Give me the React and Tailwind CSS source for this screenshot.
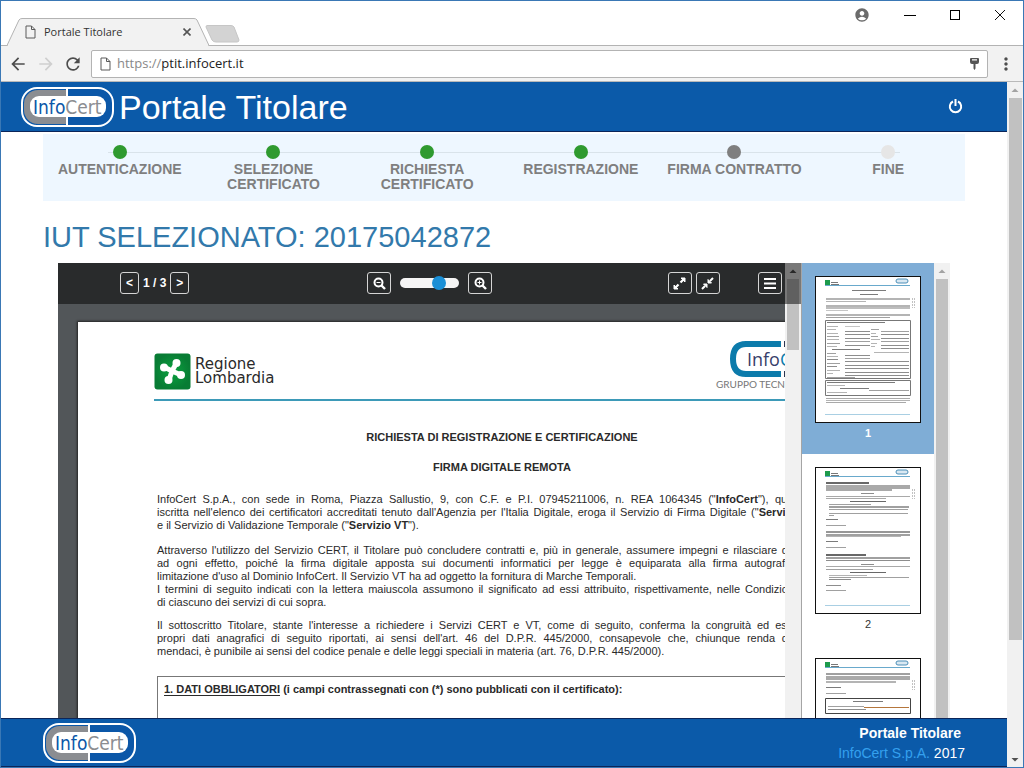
import React, { useState } from 'react';
import { MdAccountCircle, MdArrowBack, MdArrowForward, MdMoreVert, MdRefresh } from 'react-icons/md';

const steps = [
  { lines: ['AUTENTICAZIONE'], color: 'bg-[#2f9a2f]' },
  { lines: ['SELEZIONE', 'CERTIFICATO'], color: 'bg-[#2f9a2f]' },
  { lines: ['RICHIESTA', 'CERTIFICATO'], color: 'bg-[#2f9a2f]' },
  { lines: ['REGISTRAZIONE'], color: 'bg-[#2f9a2f]' },
  { lines: ['FIRMA CONTRATTO'], color: 'bg-[#7f7f7f]' },
  { lines: ['FINE'], color: 'bg-[#e6e6e6]' }
];

// Each row of a thumbnail: [x, y, width, height, opacity]
const thumbRows = {
  1: [
    [36, 13, 34, 1, 0.7], [44, 17, 18, 1, 0.7],
    [10, 21, 84, 2, 0.4], [10, 24, 40, 1, 0.4],
    [10, 28, 84, 2, 0.4], [10, 30, 84, 2, 0.35], [10, 33, 22, 1, 0.3],
    [10, 37, 84, 2, 0.4], [10, 40, 64, 1, 0.5],
    [11, 45, 58, 1, 0.7],
    [11, 49, 11, 1, 0.4], [11, 52, 9, 1, 0.4], [11, 56, 11, 1, 0.4], [11, 59, 12, 1, 0.5],
    [11, 62, 12, 1, 0.4], [11, 66, 13, 1, 0.5], [11, 69, 10, 1, 0.4], [16, 72, 28, 1, 0.7],
    [11, 76, 9, 1, 0.5], [11, 79, 11, 1, 0.4], [11, 82, 11, 1, 0.6], [11, 86, 13, 1, 0.5],
    [11, 89, 10, 1, 0.6], [11, 93, 13, 1, 0.4], [11, 96, 6, 1, 0.4], [11, 100, 28, 1, 0.5],
    [29, 49, 15, 1, 0.3], [29, 54, 25, 1, 0.6], [29, 57, 25, 1, 0.6], [29, 61, 25, 1, 0.6],
    [29, 64, 25, 1, 0.5], [29, 68, 25, 1, 0.6], [29, 78, 25, 1, 0.6], [29, 81, 25, 1, 0.5],
    [55, 52, 8, 1, 0.5], [55, 56, 5, 1, 0.4], [55, 59, 7, 1, 0.5], [55, 62, 9, 1, 0.4],
    [55, 66, 6, 1, 0.4], [55, 69, 4, 1, 0.4],
    [65, 54, 28, 1, 0.5], [65, 57, 28, 1, 0.6], [65, 61, 28, 1, 0.6], [65, 64, 28, 1, 0.5],
    [65, 68, 28, 1, 0.6], [65, 71, 28, 1, 0.6], [58, 75, 35, 1, 0.4],
    [29, 84, 64, 1, 0.6], [29, 88, 64, 1, 0.6], [29, 91, 64, 1, 0.6], [29, 95, 64, 1, 0.6],
    [29, 98, 64, 1, 0.6],
    [11, 105, 68, 1, 0.7], [11, 108, 18, 1, 0.4], [24, 111, 29, 1, 0.7], [53, 113, 40, 1, 0.5],
    [11, 115, 20, 1, 0.4],
    [10, 121, 84, 1, 0.45], [10, 123, 84, 1, 0.4], [10, 125, 80, 1, 0.45]
  ],
  2: [
    [10, 14, 43, 2, 0.8], [10, 17, 84, 2, 0.45], [10, 19, 84, 2, 0.45], [10, 21, 66, 2, 0.45],
    [45, 25, 13, 1, 0.6], [10, 28, 84, 1, 0.45], [10, 30, 60, 1, 0.45], [34, 33, 36, 1, 0.8],
    [13, 36, 42, 1, 0.5], [13, 38, 80, 2, 0.5], [13, 41, 79, 1, 0.5], [13, 45, 79, 1, 0.5], [13, 47, 5, 1, 0.5],
    [10, 51, 12, 1, 0.7], [10, 57, 20, 1, 0.5],
    [10, 63, 84, 2, 0.55], [10, 66, 84, 2, 0.5], [10, 68, 75, 1, 0.4],
    [10, 73, 12, 1, 0.7], [10, 79, 20, 1, 0.5],
    [10, 86, 40, 2, 0.8], [10, 89, 84, 2, 0.5], [10, 92, 84, 1, 0.6], [45, 96, 13, 1, 0.6],
    [10, 98, 84, 1, 0.45], [10, 101, 47, 1, 0.5], [34, 104, 36, 1, 0.8], [13, 107, 38, 1, 0.4],
    [13, 109, 80, 1, 0.5], [13, 111, 22, 1, 0.6], [10, 117, 15, 1, 0.6], [10, 122, 20, 1, 0.5]
  ],
  3: [
    [10, 14, 84, 2, 0.5], [10, 17, 84, 2, 0.45], [10, 19, 84, 2, 0.45], [10, 22, 70, 2, 0.4],
    [10, 28, 15, 1, 0.7], [10, 34, 20, 1, 0.5], [37, 42, 30, 1, 0.7],
    [12, 47, 36, 1, 0.5], [12, 50, 38, 1, 0.6]
  ]
};

const InfoCertLogo = () => (
  <svg width="94" height="40" viewBox="0 0 94 40" role="img" aria-label="InfoCert">
    <rect x="1" y="1" width="91" height="38" rx="15" fill="#0b57a8" stroke="#fff" strokeWidth="2" />
    <path d="M46 3H17A14 14 0 0 0 3 17V23A14 14 0 0 0 17 37H46Z" fill="#8b8d91" />
    <rect x="45" y="2" width="2" height="36" fill="#fff" />
    <rect x="9" y="9" width="76" height="21" rx="9" fill="#fff" />
    <text x="12" y="27" className="fill-[#0b57a8] font-['DejaVu_Sans_Condensed','DejaVu_Sans',sans-serif] text-[19px]">
      Info<tspan className="fill-[#8b8d91]">Cert</tspan>
    </text>
  </svg>
);

const PageIcon = () => (
  <svg width="11" height="14" viewBox="0 0 11 14" fill="none" stroke="#5a5a5a" aria-hidden="true">
    <path d="M1 1H6.500L10 4.500V13H1Z M6.500 1V4.500H10" />
  </svg>
);

const BrowserTop = () => (
  <div className="flex flex-col font-['Open_Sans',sans-serif]">
    <div className="flex h-[45px] justify-between border-b border-[#b3b3b3] bg-white">
      <div className="flex items-end">
        <div className="relative ml-1.5 h-7 w-[202px] translate-y-px">
          <svg className="absolute inset-0" width="202" height="28" viewBox="0 0 202 28" aria-hidden="true">
            <path d="M0 27.500L12 2Q13 .5 15 .5H187Q189 .5 190 2L202 27.500" fill="#f2f2f2" stroke="#b3b3b3" />
            <path d="M1 27.500H201" stroke="#f2f2f2" />
          </svg>
          <div className="relative flex h-full items-center pr-4 pl-[18px]">
            <PageIcon />
            <span className="ml-2 flex-1 text-[11px] text-[#333]">Portale Titolare</span>
            <button aria-label="Chiudi scheda" className="p-0.5">
              <svg width="8" height="8" viewBox="0 0 8 8" stroke="#555" strokeWidth="1.600">
                <path d="M.5 .5L7.500 7.500M7.500 .5L.5 7.500" />
              </svg>
            </button>
          </div>
        </div>
        <button aria-label="Nuova scheda" className="-ml-1 mb-0.5">
          <svg width="35" height="18" viewBox="0 0 35 18">
            <path d="M2 .5H26Q28 .5 29 2L34 15Q34 17 32 17H11Q8 17 7 15L1 2Q1 .5 2 .5Z" fill="#d3d3d3" stroke="#c6c6c6" />
          </svg>
        </button>
      </div>
      <div className="flex h-7 items-center gap-[34px] pr-[17px]">
        <button aria-label="Profilo"><MdAccountCircle size={16} className="text-[#6b6b6b]" /></button>
        <button aria-label="Riduci" className="flex h-3 w-3 items-center">
          <span className="h-px w-full bg-black" />
        </button>
        <button aria-label="Ingrandisci" className="h-2.5 w-2.5 border border-black" />
        <button aria-label="Chiudi">
          <svg width="12" height="12" viewBox="0 0 12 12" stroke="#111">
            <path d="M1 1L11 11M11 1L1 11" />
          </svg>
        </button>
      </div>
    </div>
    <div className="flex h-9 items-center border-b border-[#b9b9b9] bg-[#f2f2f2] px-[7px] text-[#4d4d4d]">
      <button aria-label="Indietro"><MdArrowBack size={20} /></button>
      <button aria-label="Avanti" className="ml-2 text-[#cfcfcf]"><MdArrowForward size={20} /></button>
      <button aria-label="Ricarica" className="ml-[7px]"><MdRefresh size={20} /></button>
      <label className="mx-2 flex h-7 flex-1 items-center rounded-xs border border-[#b3b3b3] bg-white px-2 text-[13px]">
        <PageIcon />
        <span className="ml-1.5 text-[#888]">https://</span>
        <input
          className="min-w-0 flex-1 text-[#222] outline-none"
          aria-label="Indirizzo"
          defaultValue="ptit.infocert.it"
        />
        <svg width="9" height="12" viewBox="0 0 9 12" fill="#555" aria-hidden="true">
          <path fillRule="evenodd" d="M1 0H8Q9 0 9 1V4Q9 6 7 6H5.500V10.500L4.500 12L3.500 10.500V6H2Q0 6 0 4V1Q0 0 1 0ZM2 1.300V2.600H7V1.300Z" />
        </svg>
      </label>
      <button aria-label="Menu"><MdMoreVert size={20} /></button>
    </div>
  </div>
);

const Arrow = ({ down, dark }) => (
  <svg className="h-4 w-4 shrink-0" viewBox="0 0 16 16" fill={dark ? '#505050' : '#a3a3a3'} aria-hidden="true">
    <path d={down ? 'M4.500 7H11.500L8 10.500Z' : 'M4.500 10H11.500L8 6.500Z'} />
  </svg>
);

const Steps = () => (
  <div className="relative bg-[#eef7ff] pt-[11px] pb-[9px]">
    <div className="absolute top-[18px] right-[7%] left-[7%] h-px bg-[#d9e3ea]" />
    <ol className="relative grid grid-cols-6">
      {steps.map((step) => (
        <li key={step.lines.join(' ')} className="flex flex-col items-center">
          <span className={`h-3.5 w-3.5 rounded-full ${step.color}`} />
          <span className="mt-[3px] text-center text-sm leading-[15px] font-bold whitespace-nowrap text-[#7f7f7f]">
            {step.lines.map((line) => <span key={line} className="block">{line}</span>)}
          </span>
        </li>
      ))}
    </ol>
  </div>
);

const ToolButton = ({ label, wide, children }) => (
  <button
    aria-label={label}
    className={`flex h-[22px] items-center justify-center rounded-[3px] border border-[#d5d5d5] text-white ${wide ? 'w-6' : 'w-[19px]'}`}
  >
    {children}
  </button>
);

const Magnifier = ({ plus }) => (
  <svg width="13" height="13" viewBox="0 0 13 13" fill="none" stroke="#fff" aria-hidden="true">
    <circle cx="5.500" cy="5.500" r="4" strokeWidth="2" />
    <path d="M8.500 8.500L12 12" strokeWidth="2.400" />
    <path d={plus ? 'M3.500 5.500H7.500M5.500 3.500V7.500' : 'M3.500 5.500H7.500'} />
  </svg>
);

const ViewerToolbar = () => {
  const [zoom, setZoom] = useState(71);

  return (
    <div className="absolute inset-x-0 top-0 flex h-[41px] items-center justify-between bg-black/50 pr-[19px] pb-px pl-[62px] text-xs font-bold text-white">
      <div className="flex items-center gap-1">
        <ToolButton label="Pagina precedente">&lt;</ToolButton>
        <span>1 / 3</span>
        <ToolButton label="Pagina successiva">&gt;</ToolButton>
      </div>
      <div className="ml-0.5 flex items-center gap-[9px]">
        <ToolButton label="Riduci zoom" wide><Magnifier /></ToolButton>
        <input
          type="range"
          aria-label="Zoom"
          value={zoom}
          onChange={(e) => setZoom(e.target.value)}
          className="h-2.5 w-[59px] appearance-none rounded-full bg-[#f5f5f5] [&::-webkit-slider-thumb]:h-3.5 [&::-webkit-slider-thumb]:w-3.5 [&::-webkit-slider-thumb]:appearance-none [&::-webkit-slider-thumb]:rounded-full [&::-webkit-slider-thumb]:bg-[#1a8fd6]"
        />
        <ToolButton label="Aumenta zoom" wide><Magnifier plus /></ToolButton>
      </div>
      <div className="flex items-center gap-1">
        <ToolButton label="Espandi" wide>
          <svg width="13" height="13" viewBox="0 0 13 13" fill="#fff" stroke="#fff">
            <path d="M8 1H12V5ZM1 8V12H5Z" />
            <path d="M10 3L7.500 5.500M5.500 7.500L3 10" strokeWidth="2.200" />
          </svg>
        </ToolButton>
        <ToolButton label="Comprimi" wide>
          <svg width="13" height="13" viewBox="0 0 13 13" fill="#fff" stroke="#fff">
            <path d="M7 2.500V6H10.500ZM2.500 7H6V10.500Z" />
            <path d="M12 1L9 4M4 9L1 12" strokeWidth="2" />
          </svg>
        </ToolButton>
        <div className="ml-[34px]">
          <ToolButton label="Menu documento" wide>
            <svg width="12" height="11" viewBox="0 0 12 11" fill="#fff">
              <path d="M0 0H12V2H0ZM0 4.500H12V6.500H0ZM0 9H12V11H0Z" />
            </svg>
          </ToolButton>
        </div>
      </div>
    </div>
  );
};

const Line = ({ last, children }) => (
  <span className={`block whitespace-nowrap ${last ? '' : '[text-align-last:justify]'}`}>{children}</span>
);

const DocumentPage = () => (
  <article className="ml-5 w-[849px] shrink-0 bg-white pt-[31px] pr-[84px] pl-[76px] text-[11px] leading-[13px] text-[#2a2a2a] shadow-[0_0_2px_1px_#222]">
    <header className="flex h-[46px] justify-between">
      <div className="flex gap-1">
        <svg width="37" height="37" viewBox="0 0 37 37" aria-hidden="true">
          <defs>
            <radialGradient id="green">
              <stop offset="0" stopColor="#0aa23f" />
              <stop offset="1" stopColor="#087c34" />
            </radialGradient>
          </defs>
          <rect x=".5" y=".5" width="36" height="36" rx="3" fill="url(#green)" />
          <path
            d="M22.500 10L18 18L10 14M18 18L15 27M18 18L27 22"
            fill="none" stroke="#fff" strokeWidth="5" strokeLinecap="round" strokeLinejoin="round"
          />
          <g fill="#fff">
            <circle cx="22.500" cy="10" r="4" />
            <circle cx="10" cy="14.500" r="4" />
            <circle cx="14.500" cy="27" r="4" />
            <circle cx="27" cy="22" r="4" />
          </g>
        </svg>
        <span className="pt-1 font-['DejaVu_Sans',sans-serif] text-[15px] leading-[14px]">
          Regione<br />Lombardia
        </span>
      </div>
      <div className="-mt-3 flex w-[127px] flex-col">
        <svg className="ml-3.5 shrink-0" width="100" height="36" viewBox="0 0 100 36" role="img" aria-label="InfoCert">
          <path d="M51 3H16Q3 3 3 18Q3 33 16 33H51" fill="none" stroke="#0c7bab" strokeWidth="6" />
          <path d="M54 3H84Q97 3 97 18Q97 33 84 33H54" fill="none" stroke="#2c3550" strokeWidth="6" />
          <text x="17" y="25" className="fill-[#38406a] font-['Open_Sans',sans-serif] text-[18px]">
            Info<tspan className="fill-[#0c7bab]">Cert</tspan>
          </text>
        </svg>
        <span className="mt-px font-['Lato',sans-serif] text-[10px] whitespace-nowrap text-[#777]">
          GRUPPO TECNOINVESTIMENTI
        </span>
      </div>
    </header>
    <div className="h-0.5 bg-[#3d9ab8]" />

    <div className="mt-[29px] -mr-1 ml-[3px] text-center leading-[15px] font-bold">
      <h3>RICHIESTA DI REGISTRAZIONE E CERTIFICAZIONE</h3>
      <h3 className="mt-[15px]">FIRMA DIGITALE REMOTA</h3>
    </div>

    <div className="mt-[18px] ml-[3px]">
      <p>
        <Line>InfoCert S.p.A., con sede in Roma, Piazza Sallustio, 9, con C.F. e P.I. 07945211006, n. REA 1064345 ("<b>InfoCert</b>"), quale società</Line>
        <Line>iscritta nell'elenco dei certificatori accreditati tenuto dall'Agenzia per l'Italia Digitale, eroga il Servizio di Firma Digitale ("<b>Servizio CERT</b>")</Line>
        <Line last>e il Servizio di Validazione Temporale ("<b>Servizio VT</b>").</Line>
      </p>
      <p className="mt-3">
        <Line>Attraverso l'utilizzo del Servizio CERT, il Titolare può concludere contratti e, più in generale, assumere impegni e rilasciare dichiarazioni</Line>
        <Line>ad ogni effetto, poiché la firma digitale apposta sui documenti informatici per legge è equiparata alla firma autografa, salva la</Line>
        <Line last>limitazione d'uso al Dominio InfoCert. Il Servizio VT ha ad oggetto la fornitura di Marche Temporali.</Line>
        <Line>I termini di seguito indicati con la lettera maiuscola assumono il significato ad essi attribuito, rispettivamente, nelle Condizioni Generali</Line>
        <Line last>di ciascuno dei servizi di cui sopra.</Line>
      </p>
      <p className="mt-2.5">
        <Line>Il sottoscritto Titolare, stante l'interesse a richiedere i Servizi CERT e VT, come di seguito, conferma la congruità ed esattezza dei</Line>
        <Line>propri dati anagrafici di seguito riportati, ai sensi dell'art. 46 del D.P.R. 445/2000, consapevole che, chiunque renda dichiarazioni</Line>
        <Line last>mendaci, è punibile ai sensi del codice penale e delle leggi speciali in materia (art. 76, D.P.R. 445/2000).</Line>
      </p>
      <div className="mt-[18px] h-[120px] border border-[#777] px-1.5 pt-1.5">
        <h4 className="font-bold">
          <span className="border-b border-[#2a2a2a]">1. DATI OBBLIGATORI</span> (i campi contrassegnati con (*) sono pubblicati con il certificato):
        </h4>
      </div>
    </div>
  </article>
);

const Thumbnail = ({ page, active }) => (
  <button className={`flex h-[191px] w-full shrink-0 flex-col items-center pt-[13px] text-[11px] ${active ? 'bg-[#7fadd6] font-bold text-white' : 'text-[#333]'}`}>
    <svg className="shrink-0 border border-[#111] bg-white" width="106" height="147" viewBox="0 0 104 145" aria-hidden="true">
      <rect x="9" y="3" width="5" height="5" fill="#1d9a4c" />
      <rect x="15" y="5" width="7" height="1" fill="#777" />
      <rect x="15" y="7" width="8" height="1" fill="#777" />
      <rect x="80" y="2" width="12" height="4" rx="2" fill="#d9e8f2" stroke="#4c8fb8" />
      <path d="M9 8.500H94" stroke="#69a9cc" />
      <path d="M9 137.500H94" stroke="#a9cfe3" />
      <path d="M96.500 21V31M98.500 21V31" stroke="#999" strokeDasharray="2 1" opacity=".6" />
      <g fill="#222" opacity=".85">
        {thumbRows[page].map(([x, y, w, h, o]) => (
          <rect key={`${x}-${y}`} x={x} y={y} width={w} height={h} opacity={o} />
        ))}
      </g>
      {page === 1 && <path d="M9.500 43.500H94.500V101.500H9.500ZM9.500 103.500H94.500V118.500H9.500Z" fill="none" stroke="#777" />}
      {page === 3 && <path d="M9.500 39.500H94.500V54.500H9.500Z" fill="none" stroke="#444" />}
      {page === 3 && <path d="M48 48.500H93" stroke="#b5763c" />}
    </svg>
    <span className="mt-1 leading-[13px]">{page}</span>
  </button>
);

const Viewer = () => (
  <section className="mx-[15px] flex min-h-0 flex-1">
    <div className="relative flex min-w-0 flex-1 overflow-hidden bg-[#525659]">
      <div className="flex min-w-0 flex-1 overflow-hidden pt-[59px]">
        <DocumentPage />
      </div>
      <div className="flex w-4 shrink-0 flex-col items-center bg-[#f1f1f1]">
        <Arrow dark />
        <div className="h-[71px] w-3 bg-[#c1c1c1]" />
      </div>
      <ViewerToolbar />
    </div>
    <div className="flex w-[149px] overflow-hidden bg-white">
      <div className="flex flex-1 flex-col overflow-hidden border-l border-[#a5a5a5]">
        <Thumbnail page={1} active />
        <Thumbnail page={2} />
        <Thumbnail page={3} />
      </div>
      <div className="flex w-4 flex-col items-center bg-[#f1f1f1]">
        <Arrow />
        <div className="w-3 flex-1 bg-[#c1c1c1]" />
      </div>
    </div>
  </section>
);

const App = () => {
  return (
    <div className="flex h-screen flex-col overflow-hidden border border-[#3a78b5] bg-white font-['Liberation_Sans',Arial,sans-serif]">
      <BrowserTop />
      <div className="flex min-h-0 flex-1">
        <div className="flex min-w-0 flex-1 flex-col">
          <header className="flex h-[50px] shrink-0 items-center justify-between border-b border-[#0b2559] bg-[#0b5aa9] pr-11 pl-5 text-white">
            <div className="flex items-center gap-1">
              <InfoCertLogo />
              <h1 className="text-[34px] leading-10">Portale Titolare</h1>
            </div>
            <button aria-label="Esci">
              <svg width="15" height="15" viewBox="0 0 15 15" fill="none" stroke="#fff" strokeWidth="2">
                <path d="M5 2.500A5.700 5.700 0 1 0 10 2.500M7.500 0V7" />
              </svg>
            </button>
          </header>
          <main className="flex min-h-0 flex-1 flex-col px-[42px] pt-0.5">
            <Steps />
            <h2 className="mt-4 mb-1.5 text-[29px] leading-10 text-[#3279ab]">IUT SELEZIONATO: 20175042872</h2>
            <Viewer />
          </main>
          <footer className="flex h-[49px] shrink-0 items-center justify-between border-y border-[#0b2559] bg-[#0b5aa9] px-[42px] text-sm text-white">
            <InfoCertLogo />
            <div className="text-right leading-5">
              <p className="pr-1 font-bold">Portale Titolare</p>
              <p><a href="#infocert" className="text-[#34a0ee]">InfoCert S.p.A.</a> 2017</p>
            </div>
          </footer>
        </div>
        <div className="flex w-4 shrink-0 flex-col items-center bg-[#f1f1f1]">
          <Arrow />
          <div className="w-[13px] flex-[542] bg-[#c1c1c1]" />
          <div className="flex-[111]" />
          <Arrow down dark />
        </div>
      </div>
    </div>
  );
};

export default App;
